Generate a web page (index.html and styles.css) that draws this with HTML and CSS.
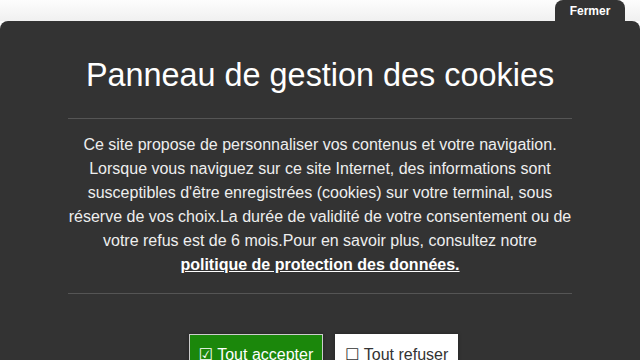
FILE: index.html
```html
<!DOCTYPE html>
<html lang="fr">
<head>
    <meta charset="UTF-8">
    <meta name="viewport" content="width=device-width, initial-scale=1.0">
    <title>Panneau de gestion des cookies</title>
    <link rel="stylesheet" href="styles.css">
</head>
<body>
    <div class="cookie-root">
        <div class="close-bar">
            <button class="close-tab" type="button">Fermer</button>
        </div>
        <div class="panel">
            <h1 class="panel-title">Panneau de gestion des cookies</h1>
            <div class="panel-info">
                Ce site propose de personnaliser vos contenus et votre navigation.
                Lorsque vous naviguez sur ce site Internet, des informations sont
                susceptibles d'être enregistrées (cookies) sur votre terminal, sous
                réserve de vos choix.La durée de validité de votre consentement ou de
                votre refus est de 6 mois.Pour en savoir plus, consultez notre
                <a href="#" class="privacy-link">politique de protection des données.</a>
            </div>
            <div class="actions">
                <button type="button" class="btn btn-accept">&#9745; Tout accepter</button>
                <button type="button" class="btn btn-deny">&#9744; Tout refuser</button>
            </div>
        </div>
    </div>
</body>
</html>
```

FILE: styles.css
```css
html, body {
    height: 100%;
}
body {
    margin: 0;
    background-color: #fff;
    font-family: "Liberation Sans", Arial, sans-serif;
    overflow: hidden;
}
.cookie-root {
    display: flex;
    flex-direction: column;
    height: 100%;
}
.close-bar {
    display: flex;
    justify-content: flex-end;
    padding-right: 15px;
    background: linear-gradient(#fdfdfd, #f0f0f0);
}
.close-tab {
    width: 70px;
    height: 21px;
    border: 0;
    border-radius: 8px 8px 0 0;
    background-color: #333;
    color: #fff;
    font-family: "Liberation Sans", Arial, sans-serif;
    font-size: 12px;
    font-weight: bold;
    padding: 0;
    cursor: pointer;
}
.panel {
    flex: 1;
    background-color: #333;
    border-radius: 8px 8px 0 0;
    padding: 34px 68px 0;
    color: #fff;
    text-align: center;
}
.panel-title {
    margin: 0;
    font-size: 32.4px;
    font-weight: normal;
    line-height: 40px;
    padding-bottom: 23px;
    border-bottom: 1px solid #555;
}
.panel-info {
    font-size: 16px;
    line-height: 24px;
    color: #eee;
    padding: 14px 0 16px;
    border-bottom: 1px solid #555;
}
.privacy-link {
    color: #fff;
    font-weight: bold;
    text-decoration: underline;
}
.actions {
    display: flex;
    justify-content: center;
    gap: 12px;
    padding: 40px 0 0 7px;
}
.btn {
    font-family: "Liberation Sans", "DejaVu Sans", sans-serif;
    font-size: 16px;
    line-height: 18px;
    padding: 11px 9px;
    border: 1px solid #ccc;
    border-radius: 0;
    box-shadow: 0 0 3px #222;
    cursor: pointer;
}
.btn-accept {
    background-color: #1b870b;
    color: #fff;
}
.btn-deny {
    background-color: #fff;
    color: #333;
    border-color: #fff;
}
```
